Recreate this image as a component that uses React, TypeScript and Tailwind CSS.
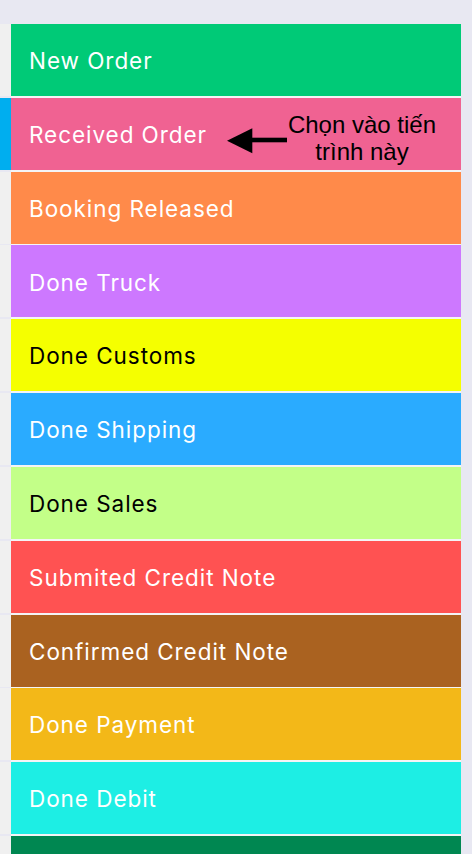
import React from "react";

type Item = { label: string; bg: string; dark?: boolean; selected?: boolean };

const items: Item[] = [
  { label: "New Order", bg: "bg-[#00ca77]" },
  { label: "Received Order", bg: "bg-[#f06292]", selected: true },
  { label: "Booking Released", bg: "bg-[#ff8a4a]" },
  { label: "Done Truck", bg: "bg-[#cd78ff]" },
  { label: "Done Customs", bg: "bg-[#f5ff00]", dark: true },
  { label: "Done Shipping", bg: "bg-[#2aabff]" },
  { label: "Done Sales", bg: "bg-[#c3ff88]", dark: true },
  { label: "Submited Credit Note", bg: "bg-[#ff5252]" },
  { label: "Confirmed Credit Note", bg: "bg-[#aa6220]" },
  { label: "Done Payment", bg: "bg-[#f3b818]" },
  { label: "Done Debit", bg: "bg-[#1deee4]" },
  { label: "", bg: "bg-[#008751]" },
];

export default function App() {
  return (
    <div
      className="w-[472px] h-[854px] overflow-hidden bg-[#e8e8f2] pt-[24px] relative"
      style={{ fontFamily: "Inter, 'Noto Sans', sans-serif" }}
    >
      <div className="flex flex-col pr-[11px]">
        {items.map((it, i) => (
          <div key={i} className="flex">
            <div className="flex flex-col w-[11px] pb-[1.82px]">
              <div className={`h-[72px] ${it.selected ? "bg-[#00aeef]" : "bg-[#f0f0f0]"}`} />
            </div>
            <div className="flex-1 bg-[#f4f4f6] pb-[1.82px]">
              <div
                className={`h-[72px] ${it.bg} flex items-center pl-[18px] text-[22.5px] tracking-[0.042em] font-normal ${
                  it.dark ? "text-black" : "text-white"
                }`}
              >
                <span className="translate-y-[1px]">{it.label}</span>
              </div>
            </div>
          </div>
        ))}
      </div>

      <div className="absolute left-[226px] top-[127px] flex items-center">
        <svg width="62" height="28" viewBox="0 0 62 28">
          <polygon points="1,13.7 26.3,1.3 26.3,26.3" fill="#000" />
          <rect x="25" y="10.7" width="36" height="4.6" fill="#000" />
        </svg>
      </div>
      <div
        className="absolute left-[282px] top-[112px] w-[160px] text-center text-black text-[24px] leading-[26.5px]"
        style={{ fontFamily: "'Liberation Sans', Arial, sans-serif" }}
      >
        Chọn vào tiến
        <br />
        trình này
      </div>
    </div>
  );
}
